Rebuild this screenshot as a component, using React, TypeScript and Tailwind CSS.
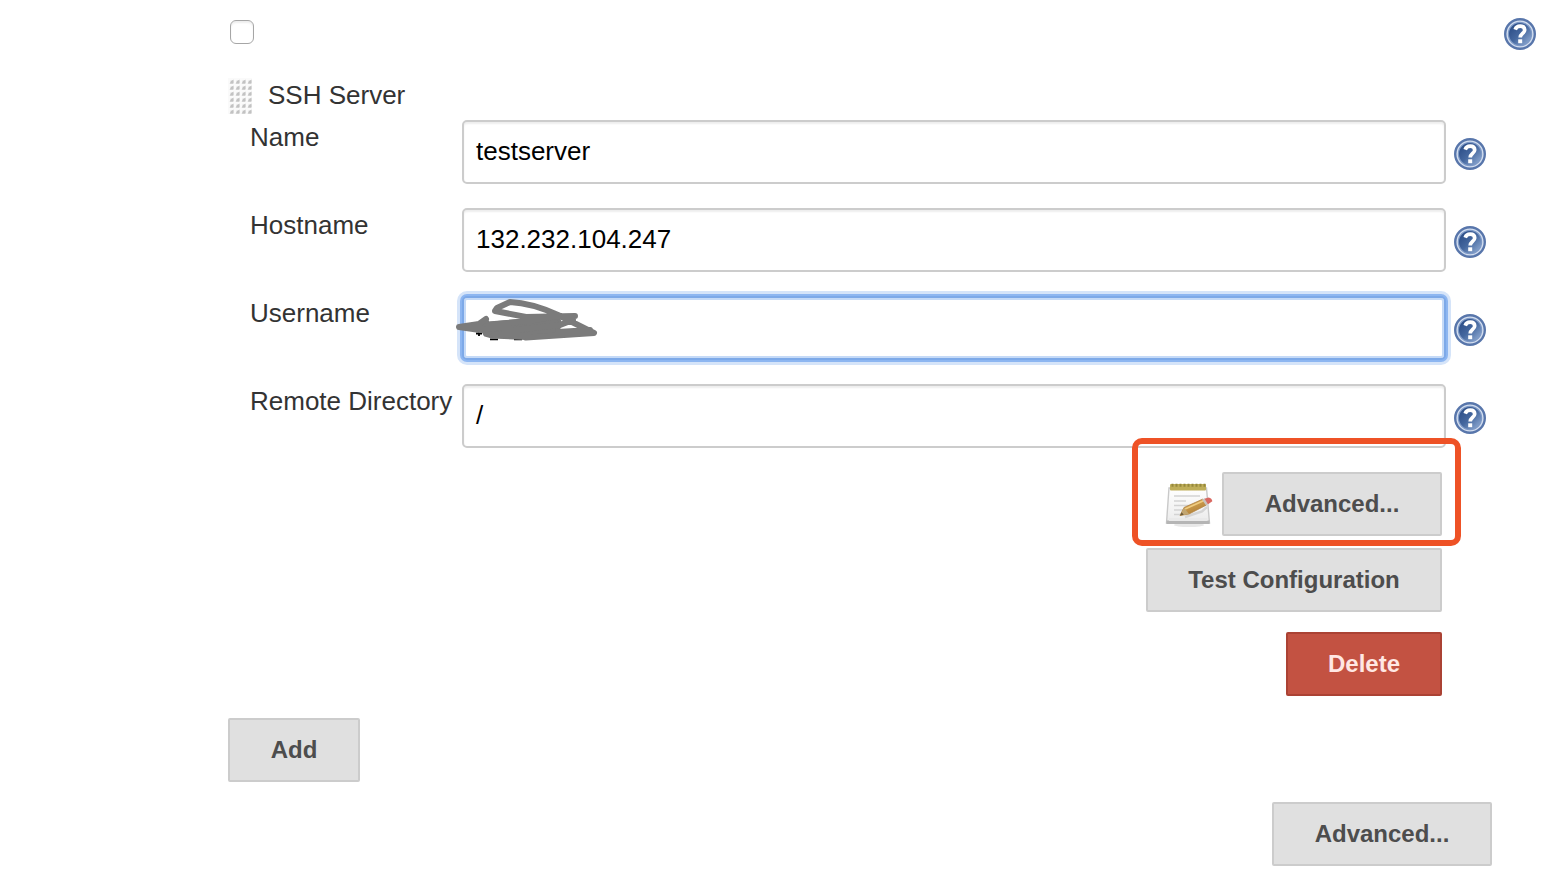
import type { ReactNode } from "react";

function HelpIcon() {
  return (
    <svg className="block h-8 w-8 shrink-0" viewBox="0 0 32 32" aria-label="Help">
      <defs>
        <linearGradient id="help-fill" x1="0" y1="0" x2="1" y2="1">
          <stop offset="0" stopColor="#24457f" />
          <stop offset="0.5" stopColor="#45689f" />
          <stop offset="1" stopColor="#9bb5db" />
        </linearGradient>
      </defs>
      <circle cx="16" cy="16" r="14.8" fill="#d3deef" stroke="#5876ab" strokeWidth="2.4" />
      <circle cx="16" cy="16" r="11.6" fill="url(#help-fill)" stroke="#7c98c6" strokeWidth="1.2" />
      <path
        d="M11.2 11.6C12 9.2 13.8 8.2 16.2 8.200C19 8.200 20.700 9.700 20.700 12C20.700 15.400 16.200 15.600 16.200 19.600"
        fill="none"
        stroke="#ffffff"
        strokeWidth="3.700"
      />
      <rect x="14.2" y="21.300" width="4" height="3.900" fill="#ffffff" />
    </svg>
  );
}

function DragHandle() {
  return (
    <svg className="mt-[2px] block h-9 w-6 shrink-0" viewBox="0 0 24 36">
      <defs>
        <pattern id="grip" width="6" height="6" patternUnits="userSpaceOnUse">
          <rect width="6" height="6" fill="#fafafa" />
          <path d="M1.600 5.400L5.400 1.600V5.400Z" fill="#b0b0b0" />
          <rect x="2.600" y="2.600" width="2.600" height="2.600" fill="#c2c2c2" />
        </pattern>
      </defs>
      <rect width="24" height="36" fill="url(#grip)" />
    </svg>
  );
}

function NotepadIcon() {
  return (
    <svg className="mt-2 block h-12 w-12 shrink-0" viewBox="0 0 48 48">
      <defs>
        <linearGradient id="paper" x1="0" y1="0" x2="0" y2="1">
          <stop offset="0" stopColor="#ffffff" />
          <stop offset="1" stopColor="#ebebeb" />
        </linearGradient>
        <linearGradient id="pencil" x1="0" y1="0" x2="0.6" y2="1">
          <stop offset="0" stopColor="#e3b55f" />
          <stop offset="1" stopColor="#ad7c35" />
        </linearGradient>
      </defs>
      <ellipse cx="24" cy="45" rx="15" ry="2" fill="#e8e8e8" />
      <path d="M4 8H41.500L44.500 43H1.500Z" fill="url(#paper)" stroke="#c9c9c9" strokeWidth="1.400" />
      <path d="M1.500 40.500H44.500V44H1.500Z" fill="#b5b5b5" />
      <path d="M4 38H42.500V41H4Z" fill="#e9e9e9" />
      <rect x="5" y="4" width="36" height="6.500" rx="1" fill="#bfae59" />
      <path d="M6.500 5.200H41" stroke="#96883c" strokeWidth="3" strokeDasharray="2 2" />
      <path d="M9 16H35M9 21H21M9 25.500H29M9 30H19M9 34.500H15" stroke="#d3d3d3" strokeWidth="1.700" />
      <path d="M20 37L37 31.500L42 27" fill="none" stroke="#d5d5d5" strokeWidth="2.500" />
      <path d="M15 35.500L19 27.500L38 19L41.500 25L24 34Z" fill="url(#pencil)" stroke="#b18342" strokeWidth="0.800" />
      <path d="M20 29L38.500 20.800" stroke="#efcc80" strokeWidth="1.600" />
      <path d="M15 35.500L19 27.500L24 34Z" fill="#c2a671" />
      <path d="M15 35.500L16.600 32.300L18.800 34.800Z" fill="#6e5c3b" />
      <path d="M37 19.500L40 18.300L43.500 23.400L40.800 25.200Z" fill="#c8c3bd" />
      <path d="M39.500 18.700L43.500 17.400Q47 18 47.300 21.300L43 24.200Z" fill="#d96861" />
    </svg>
  );
}

function Scribble() {
  return (
    <svg className="pointer-events-none absolute -left-[24px] -top-[18px] h-[100px] w-[200px]" viewBox="0 0 200 100">
      <path d="M36 53.500H42M39 51V56M50 59.300H58M74 59.300H82" stroke="#000000" strokeWidth="1.800" />
      <path
        d="M19 47L40 43L46 39L48 43L84 40L118 37L121 44L118 50L120 53L86 58.500L52 57L45 55L43 51L36 50Z"
        fill="#7b7b7b"
        stroke="#7b7b7b"
        strokeWidth="3"
        strokeLinejoin="round"
      />
      <path
        d="M19 47L39 44L46 39M19 47L40 50L70 46M48 45L89 41L117 36M135 36L86 37L55 31L57 28L70 22Q92 23 118 35L154 53L86 57.500M66 51L120 45L133 40M54 54L88 56M118 52L150 50"
        fill="none"
        stroke="#7b7b7b"
        strokeWidth="6"
        strokeLinecap="round"
        strokeLinejoin="round"
      />
    </svg>
  );
}

function Field({ label, value, focused, children }: { label: string; value?: string; focused?: boolean; children?: ReactNode }) {
  return (
    <div className="flex h-[88px] items-start pl-[250px]">
      <div className="w-[212px] shrink-0 whitespace-nowrap pt-[2px] text-[26px] leading-[30px] text-[#333333]">
        {label}
      </div>
      <div
        className={
          focused
            ? "relative h-16 w-[984px] rounded-[5px] border-2 border-[#7da9e8] bg-white shadow-[0_0_0_2px_#8db6f1,0_0_0_5px_#d5e4f9,inset_0_0_0_2px_#c5daf7]"
            : "relative h-16 w-[984px] rounded-[5px] border-2 border-[#cccccc] bg-white px-3 pt-[14px] text-[26px] leading-[30px] text-black shadow-[inset_0_2px_2px_#eeeeee]"
        }
      >
        {value}
        {children}
      </div>
      <div className="ml-2 mt-[18px]">
        <HelpIcon />
      </div>
    </div>
  );
}

function Button({ className, children }: { className: string; children: ReactNode }) {
  return (
    <button
      type="button"
      className={
        "block h-16 shrink-0 whitespace-nowrap rounded-[2px] border-2 text-center text-[24px] font-bold leading-[60px] " + className
      }
    >
      {children}
    </button>
  );
}

export default function App() {
  return (
    <div className="h-[890px] w-[1546px] overflow-hidden bg-white font-['Liberation_Sans',Arial,sans-serif]">
      <div className="flex h-[76px] items-start justify-between pl-[230px] pr-[10px]">
        <div
          role="checkbox"
          aria-checked="false"
          className="mt-5 h-6 w-6 rounded-[6px] border border-[#a6a6a6] bg-white shadow-[inset_0_2px_2px_#eeeeee]"
        />
        <div className="mt-[18px]">
          <HelpIcon />
        </div>
      </div>
      <div className="flex h-11 items-start pl-[228px]">
        <DragHandle />
        <div className="ml-4 pt-1 text-[26px] leading-[30px] text-[#333333]">SSH Server</div>
      </div>
      <Field label="Name" value="testserver" />
      <Field label="Hostname" value="132.232.104.247" />
      <Field label="Username" focused>
        <Scribble />
      </Field>
      <Field label="Remote Directory" value="/" />
      <div className="relative flex flex-col items-end pr-[104px]">
        <div className="pointer-events-none absolute -top-[34px] left-[1132px] h-[108px] w-[329px] rounded-[10px] border-6 border-[#ee5226]" />
        <div className="flex items-start gap-[9px]">
          <NotepadIcon />
          <Button className="w-[220px] border-[#cccccc] bg-[#e0e0e0] text-[#4d4d4d]">Advanced...</Button>
        </div>
        <Button className="mt-3 w-[296px] border-[#cccccc] bg-[#e0e0e0] text-[#4d4d4d]">Test Configuration</Button>
        <Button className="mt-5 w-[156px] border-[#ab4234] bg-[#c35242] text-[#ffe7e3]">Delete</Button>
      </div>
      <div className="mt-[22px] pl-[228px]">
        <Button className="w-[132px] border-[#cccccc] bg-[#e0e0e0] text-[#4d4d4d]">Add</Button>
      </div>
      <div className="mt-5 flex justify-end pr-[54px]">
        <Button className="w-[220px] border-[#cccccc] bg-[#e0e0e0] text-[#4d4d4d]">Advanced...</Button>
      </div>
    </div>
  );
}
